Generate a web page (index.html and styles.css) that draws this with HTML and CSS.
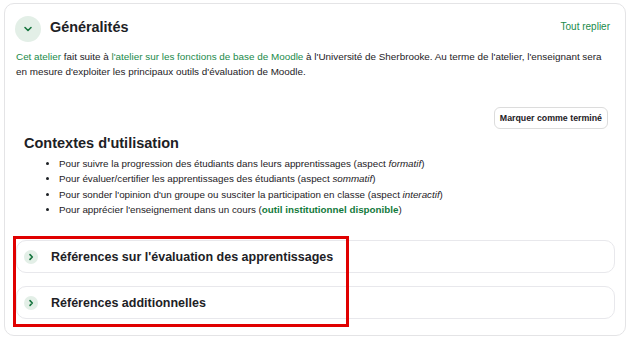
FILE: index.html
```html
<!DOCTYPE html>
<html>
    <head>
        <link rel="stylesheet" href="styles.css">
    </head>
    <body>
        <div class="card">
            <div class="card-header">
                <span class="toggle">
                    <svg width="10" height="10" viewBox="0 0 10 10"><path d="M2 3.5 L5 6.5 L8 3.5" fill="none" stroke="#17753f" stroke-width="1.6" stroke-linecap="round" stroke-linejoin="round"/></svg>
                </span>
                <h2 class="section-title">Généralités</h2>
                <a class="collapse-all">Tout replier</a>
            </div>

            <p class="summary">
                <a>Cet atelier</a> fait suite à <a>l'atelier sur les fonctions de base de Moodle</a> à l'Université de Sherbrooke. Au terme de l'atelier, l'enseignant sera en mesure d'exploiter les principaux outils d'évaluation de Moodle.
            </p>

            <div class="actions">
                <button class="btn-complete">Marquer comme terminé</button>
            </div>

            <h3 class="context-title">Contextes d'utilisation</h3>
            <ul class="context-list">
                <li>Pour suivre la progression des étudiants dans leurs apprentissages (aspect <em>formatif</em>)</li>
                <li>Pour évaluer/certifier les apprentissages des étudiants (aspect <em>sommatif</em>)</li>
                <li>Pour sonder l'opinion d'un groupe ou susciter la participation en classe (aspect <em>interactif</em>)</li>
                <li>Pour apprécier l'enseignement dans un cours (<strong>outil institutionnel disponible</strong>)</li>
            </ul>

            <div class="subsection">
                <span class="toggle small">
                    <svg width="8" height="8" viewBox="0 0 8 8"><path d="M3 1.6 L5.3 4 L3 6.4" fill="none" stroke="#17753f" stroke-width="1.6" stroke-linecap="round" stroke-linejoin="round"/></svg>
                </span>
                <span class="subsection-title">Références sur l'évaluation des apprentissages</span>
            </div>
            <div class="subsection">
                <span class="toggle small">
                    <svg width="8" height="8" viewBox="0 0 8 8"><path d="M3 1.6 L5.3 4 L3 6.4" fill="none" stroke="#17753f" stroke-width="1.6" stroke-linecap="round" stroke-linejoin="round"/></svg>
                </span>
                <span class="subsection-title">Références additionnelles</span>
            </div>

            <div class="highlight"></div>
        </div>
    </body>
</html>
```

FILE: styles.css
```css
body, html {
    margin: 0;
    padding: 0;
    background-color: white;
    color: #1d2125;
    font-family: 'Liberation Sans', Arial, sans-serif;
}

body {
    padding: 3px 4px 0 4px;
}

.card {
    position: relative;
    box-sizing: border-box;
    height: 333px;
    border: 1px solid #e4e4e6;
    border-radius: 10px;
    padding: 12px 10px 0 11px;
}

.card-header {
    display: flex;
    align-items: center;
    margin-left: -1px;
}

.toggle {
    display: flex;
    align-items: center;
    justify-content: center;
    width: 26px;
    height: 26px;
    border-radius: 50%;
    background-color: #e3efe7;
}

.toggle.small {
    width: 14px;
    height: 14px;
}

.section-title {
    margin: 0 0 5px 9px;
    font-size: 14.4px;
    font-weight: bold;
    flex: 1;
}

.collapse-all {
    color: #1a8a4a;
    font-size: 10px;
    margin-right: 5px;
    margin-bottom: 5px;
}

.summary {
    margin: 7px 0 0 0;
    font-size: 9.9px;
    line-height: 15px;
}

.summary a {
    color: #1a8a4a;
}

.actions {
    display: flex;
    justify-content: flex-end;
    margin-top: 28px;
    padding-right: 7px;
}

.btn-complete {
    font-family: 'Liberation Sans', Arial, sans-serif;
    font-size: 8.8px;
    font-weight: bold;
    color: #1d2125;
    background: white;
    border: 1px solid #dcdcdc;
    border-radius: 6px;
    height: 22px;
    padding: 0 5px;
}

.context-title {
    margin: 5px 0 0 8px;
    font-size: 14.5px;
    line-height: 18px;
    font-weight: bold;
}

.context-list {
    margin: 4px 0 0 0;
    padding-left: 43px;
    font-size: 9.8px;
    line-height: 15.3px;
}

.context-list strong {
    color: #137a3c;
}

.subsection {
    display: flex;
    align-items: center;
    box-sizing: border-box;
    height: 33px;
    border: 1px solid #e8e8ec;
    border-radius: 10px;
    padding-left: 7px;
    margin-top: 13px;
}

.context-list + .subsection {
    margin-top: 23px;
}

.subsection-title {
    margin-left: 13px;
    font-size: 12.5px;
    font-weight: bold;
}

.highlight {
    position: absolute;
    left: 8px;
    top: 232px;
    width: 336px;
    height: 91px;
    box-sizing: border-box;
    border: 3px solid #e00000;
}
```
